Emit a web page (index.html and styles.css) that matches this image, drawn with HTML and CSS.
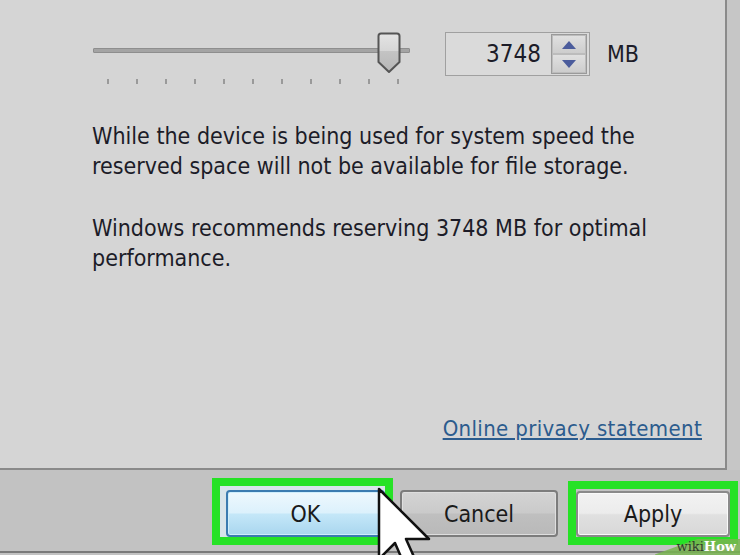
FILE: index.html
```html
<!DOCTYPE html>
<html lang="en">

<head>
    <meta charset="UTF-8">
    <meta name="viewport" content="width=device-width, initial-scale=1.0">
    <title>ReadyBoost</title>
    <link rel="stylesheet" href="styles.css">
</head>

<body>
    <div class="window">
        <div class="top">
            <div class="panel">
                <!-- space to reserve -->
                <div class="size-row">
                    <div class="slider">
                        <div class="track"></div>
                        <svg class="thumb" width="24" height="42" viewBox="0 0 24 42">
                            <defs>
                                <linearGradient id="thumbFill" x1="0" y1="0" x2="0" y2="1">
                                    <stop offset="0" stop-color="#e4e4e4" />
                                    <stop offset="0.45" stop-color="#d6d6d6" />
                                    <stop offset="0.46" stop-color="#c4c4c4" />
                                    <stop offset="1" stop-color="#b6b6b6" />
                                </linearGradient>
                            </defs>
                            <path d="M4 1.5 H20 Q22.5 1.5 22.5 4 V30 L12 40 L1.5 30 V4 Q1.5 1.5 4 1.5 Z" fill="url(#thumbFill)" stroke="#555" stroke-width="2" stroke-linejoin="round" />
                        </svg>
                        <div class="ticks">
                            <span></span><span></span><span></span><span></span><span></span><span></span>
                            <span></span><span></span><span></span><span></span><span></span>
                        </div>
                    </div>

                    <div class="spin">
                        <span class="spin-value">3748</span>
                        <div class="spin-buttons">
                            <div class="spin-btn">
                                <svg width="14" height="8" viewBox="0 0 14 8"><path d="M7 0 L14 8 H0 Z" fill="#4b5c9c" /></svg>
                            </div>
                            <div class="spin-btn">
                                <svg width="14" height="8" viewBox="0 0 14 8"><path d="M0 0 H14 L7 8 Z" fill="#4b5c9c" /></svg>
                            </div>
                        </div>
                    </div>
                    <span class="unit">MB</span>
                </div>

                <p class="note">While the device is being used for system speed the reserved space will not be available for file storage.</p>
                <p class="note">Windows recommends reserving 3748 MB for optimal performance.</p>

                <div class="link-row">
                    <a href="#" class="privacy">Online privacy statement</a>
                </div>
            </div>
            <div class="edge"></div>
        </div>

        <div class="footer">
            <div class="highlight hl-ok">
                <button class="btn btn-ok">OK</button>
            </div>
            <button class="btn btn-cancel">Cancel</button>
            <div class="highlight hl-apply">
                <button class="btn btn-apply">Apply</button>
            </div>
        </div>
    </div>

    <!-- mouse pointer over the OK button -->
    <svg class="cursor" width="60" height="90" viewBox="0 0 60 90">
        <path d="M2 2 V72 L18 56 L31 86 L42 81 L29 52 H52 Z" fill="#fff" stroke="#111" stroke-width="2.5" stroke-linejoin="round" />
    </svg>

    <div class="watermark"><span class="wm-wiki">wiki</span><span class="wm-how">How</span></div>
</body>

</html>
```

FILE: styles.css
```css
body {
    margin: 0;
    width: 740px;
    height: 555px;
    overflow: hidden;
    position: relative;
    background-color: #c2c2c2;
    font-family: 'DejaVu Sans Condensed', 'DejaVu Sans', sans-serif;
    color: #1c1c28;
}

.window {
    display: flex;
    flex-direction: column;
    height: 555px;
}

.top {
    display: flex;
    height: 470px;
}

.panel {
    width: 725px;
    height: 468px;
    background-color: #d5d5d5;
    border-right: 2px solid #8a8a8a;
    border-bottom: 2px solid #8a8a8a;
    display: flex;
    flex-direction: column;
}

.edge {
    flex: 1;
    background-color: #c6c6c6;
}

.size-row {
    display: flex;
    align-items: flex-start;
    margin-top: 32px;
    padding-left: 93px;
}

.slider {
    position: relative;
    width: 317px;
    padding-top: 16px;
}

.track {
    height: 3px;
    background-color: #a4a4a4;
    border: 1px solid #8e8e8e;
    border-radius: 1px;
}

.thumb {
    position: absolute;
    left: 284px;
    top: 0;
}

.ticks {
    display: flex;
    justify-content: space-between;
    margin-top: 26px;
    padding: 0 11px 0 14px;
}

.ticks span {
    width: 2px;
    height: 5px;
    background-color: #9a9a9a;
}

.spin {
    margin-left: 35px;
    width: 141px;
    height: 42px;
    border: 1px solid #a0a0a0;
    background-color: #dadada;
    display: flex;
    align-items: center;
    justify-content: flex-end;
    padding-right: 2px;
}

.spin-value {
    font-size: 24px;
    margin-right: 10px;
}

.spin-buttons {
    width: 34px;
    height: 38px;
    display: flex;
    flex-direction: column;
    border: 1px solid #9a9a9a;
}

.spin-btn {
    flex: 1;
    display: flex;
    align-items: center;
    justify-content: center;
    background: linear-gradient(#e0e0e0, #cdcdcd);
    border: 1px solid #bcbcbc;
}

.unit {
    margin-left: 17px;
    font-size: 23px;
    line-height: 44px;
}

.note {
    margin: 37px 0 0;
    padding-left: 92px;
    padding-right: 60px;
    font-size: 23px;
    line-height: 30px;
}

.note + .note {
    margin-top: 32px;
}

.link-row {
    margin-top: auto;
    padding: 0 23px 22px 0;
    text-align: right;
    line-height: 30px;
}

.privacy {
    font-size: 22px;
    letter-spacing: 0.35px;
    color: #2c5c8e;
    text-decoration: underline;
}

.footer {
    display: flex;
    align-items: flex-start;
    height: 83px;
    padding-left: 212px;
    border-bottom: 2px solid #7a7a7a;
    box-sizing: border-box;
}

.highlight {
    border: 8px solid #26e226;
}

.hl-ok {
    margin-top: 8px;
    padding: 4px 0 0 6px;
    background-color: #d8e4ea;
}

.hl-apply {
    margin-top: 11px;
    margin-left: 10px;
    padding-top: 2px;
}

.btn {
    font-family: 'DejaVu Sans Condensed', 'DejaVu Sans', sans-serif;
    font-size: 23px;
    color: #1a1a1a;
    border-radius: 4px;
    padding: 0;
    display: block;
}

.btn-ok {
    width: 159px;
    height: 47px;
    border: 2px solid #3b7bb0;
    background: linear-gradient(#eef8fd 0%, #dcf1fc 48%, #c4e7f8 52%, #a9d6ef 100%);
    box-shadow: inset 0 0 0 1px #cfeefc;
}

.btn-cancel {
    margin-top: 20px;
    margin-left: 7px;
    width: 158px;
    height: 47px;
    border: 2px solid #7c7c7c;
    background: linear-gradient(#d4d4d4 0%, #cacaca 48%, #bfbfbf 52%, #b9b9b9 100%);
    box-shadow: inset 0 0 0 1px #dedede;
}

.btn-apply {
    width: 154px;
    height: 46px;
    border: 2px solid #8a8a8a;
    background: linear-gradient(#f2f2f2 0%, #ececec 48%, #e0e0e0 52%, #d8d8d8 100%);
    box-shadow: inset 0 0 0 1px #fafafa;
}

.cursor {
    position: absolute;
    left: 377px;
    top: 487px;
}

.watermark {
    position: absolute;
    right: 0;
    bottom: 0;
    padding: 1px 4px 1px 22px;
    background: linear-gradient(160deg, transparent 14px, rgba(120, 180, 80, 0.85) 15px);
    font-family: 'DejaVu Serif', serif;
    font-weight: bold;
    font-size: 13px;
    line-height: 14px;
}

.wm-wiki {
    color: #2f3a2a;
    font-weight: normal;
}

.wm-how {
    color: #ffffff;
}
```
